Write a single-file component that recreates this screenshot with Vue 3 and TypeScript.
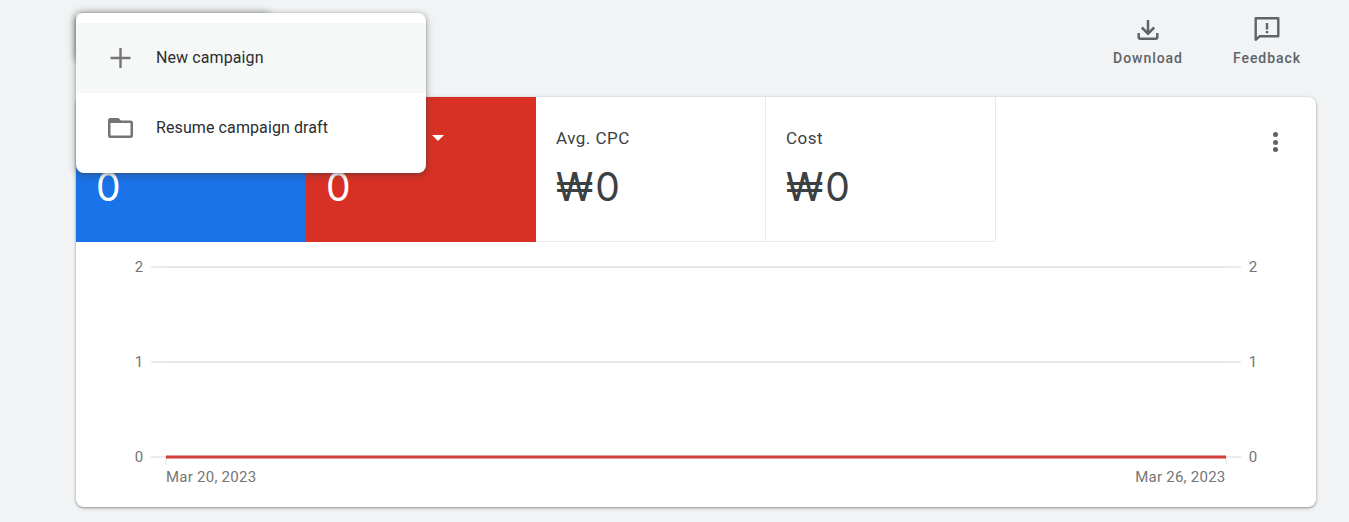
<script setup lang="ts">
interface Tile {
  label: string
  value: string
  kind: string
}

const tiles: Tile[] = [
  { label: 'Clicks', value: '0', kind: 'blue' },
  { label: 'Impressions', value: '0', kind: 'red' },
  { label: 'Avg. CPC', value: '₩0', kind: 'plain' },
  { label: 'Cost', value: '₩0', kind: 'plain' },
]

const gridLines = [
  { label: '2', y: 267 },
  { label: '1', y: 362 },
  { label: '0', y: 457 },
]
</script>

<template>
  <div class="page">
    <header class="toolbar">
      <button class="create">New campaign</button>
      <div class="actions">
        <button class="action">
          <svg width="30" height="30" viewBox="0 0 30 30" fill="none" stroke="#5f6368" stroke-width="2.500">
            <path d="M5.700 18v4.300a1.400 1.400 0 0 0 1.400 1.400h15.800a1.400 1.400 0 0 0 1.400-1.400V18" />
            <path d="M15 5v13M8.800 12.500l6.200 6.200 6.200-6.200" />
          </svg>
          <span>Download</span>
        </button>
        <button class="action">
          <svg width="30" height="30" viewBox="0 0 30 30" fill="none" stroke="#5f6368" stroke-width="2.400" stroke-linejoin="round">
            <path d="M3.700 3.200h22.600v18H7.800l-4.100 3.600z" />
            <path d="M15 8v6.500M15 16v2.200" />
          </svg>
          <span>Feedback</span>
        </button>
      </div>
    </header>

    <section class="card">
      <div class="tile-row">
        <div class="tiles">
          <div v-for="tile in tiles" :key="tile.label" class="tile" :class="tile.kind">
            <div class="tile-label">
              <span>{{ tile.label }}</span>
              <i v-if="tile.kind !== 'plain'" class="caret"></i>
            </div>
            <div class="tile-value">{{ tile.value }}</div>
          </div>
        </div>
        <button class="more">
          <i></i>
          <i></i>
          <i></i>
        </button>
      </div>

      <svg class="chart" width="1240" height="265" viewBox="76 242 1240 265">
        <g v-for="line in gridLines" :key="line.label">
          <line x1="151" x2="1241" :y1="line.y" :y2="line.y" stroke="#ebebeb" stroke-width="2" />
          <line x1="166" x2="1226" :y1="line.y" :y2="line.y" stroke="#e6e6e6" stroke-width="2" />
          <text x="139" :y="line.y + 5" text-anchor="middle" class="axis">{{ line.label }}</text>
          <text x="1253" :y="line.y + 5" text-anchor="middle" class="axis">{{ line.label }}</text>
        </g>
        <line x1="166" x2="166" y1="457" y2="465" stroke="#e3e4e6" />
        <line x1="1226" x2="1226" y1="457" y2="465" stroke="#e3e4e6" />
        <line x1="166" x2="1226" y1="457" y2="457" stroke="#d23f3b" stroke-width="3" />
        <text x="166" y="482" class="axis date">Mar 20, 2023</text>
        <text x="1225.500" y="482" text-anchor="end" class="axis date">Mar 26, 2023</text>
      </svg>
    </section>

    <div class="menu">
      <div class="menu-item active">
        <svg width="24" height="24" viewBox="0 0 24 24" fill="#757575">
          <path d="M11.300 2h2.400v8.800h8.800v2.400h-8.800V22h-2.400v-8.800H2.500v-2.400h8.800z" />
        </svg>
        <span>New campaign</span>
      </div>
      <div class="menu-item">
        <svg width="26" height="24" viewBox="0 0 26 24" fill="#757575" fill-rule="evenodd">
          <path d="M2.500 2h8L13 4.500h9.500A2.500 2.500 0 0 1 25 7v12.500a2.500 2.500 0 0 1-2.500 2.500h-20A2.500 2.500 0 0 1 0 19.500v-15A2.500 2.500 0 0 1 2.500 2zm0 5v12.500h20V7z" />
        </svg>
        <span>Resume campaign draft</span>
      </div>
    </div>
  </div>
</template>

<style>
html,
body {
  margin: 0;
  background: #f1f3f4;
  overflow: hidden;
}
</style>

<style scoped>
.page {
  position: relative;
  height: 522px;
  padding: 0 33px 0 76px;
  box-sizing: border-box;
  font-family: Roboto, "Liberation Sans", sans-serif;
  background: #f1f3f4;
}

button {
  border: 0;
  background: none;
  padding: 0;
  font-family: inherit;
}

.toolbar {
  display: flex;
  justify-content: space-between;
  height: 97px;
}

.create {
  width: 194px;
  height: 46px;
  margin-top: 13px;
  border-radius: 4px;
  background: #fff;
  box-shadow: 0 2px 6px rgba(60, 64, 67, 0.45), 0 0 10px rgba(60, 64, 67, 0.3);
}

.actions {
  display: flex;
  gap: 50px;
  padding-top: 15px;
  padding-right: 15px;
}

.action {
  display: flex;
  flex-direction: column;
  align-items: center;
  color: #5f6368;
  font-size: 14px;
  font-weight: 500;
  letter-spacing: 0.95px;
}

.action svg {
  display: block;
}

.action span {
  margin-top: 4px;
  line-height: 18px;
}

.card {
  height: 410px;
  background: #fff;
  border-radius: 8px;
  overflow: hidden;
  box-shadow: 0 1px 2px rgba(60, 64, 67, 0.35), 0 1px 3px 1px rgba(60, 64, 67, 0.18);
}

.tile-row {
  display: flex;
  justify-content: space-between;
}

.tiles {
  display: flex;
}

.tile {
  width: 230px;
  height: 145px;
  box-sizing: border-box;
  padding: 32px 20px 0;
  color: #3c4043;
  border-right: 1px solid #e8eaed;
  border-bottom: 1px solid #e8eaed;
}

.tile.blue {
  background: #1a73e8;
  color: #fff;
  border: 0;
}

.tile.red {
  background: #d93025;
  color: #fff;
  border: 0;
}

.tile-label {
  display: flex;
  align-items: center;
  height: 18px;
  font-size: 17px;
  line-height: 18px;
  letter-spacing: 0.5px;
}

.caret {
  margin-left: 7px;
  border-left: 6px solid transparent;
  border-right: 6px solid transparent;
  border-top: 6px solid #fff;
}

.tile-value {
  margin-top: 15px;
  font-family: Inter, Roboto, sans-serif;
  font-size: 39px;
  font-weight: 400;
  letter-spacing: 2px;
  line-height: 50px;
}

.more {
  display: flex;
  flex-direction: column;
  gap: 2.5px;
  margin: 35px 38px 0 0;
  height: 20px;
}

.more i {
  width: 5px;
  height: 5px;
  border-radius: 50%;
  background: #5f6368;
}

.chart {
  display: block;
}

.axis {
  font-size: 15px;
  fill: #757575;
}

.date {
  letter-spacing: 0.25px;
}

.menu {
  position: absolute;
  top: 13px;
  left: 76px;
  width: 350px;
  padding: 10px 0;
  background: #fff;
  border-radius: 8px;
  box-shadow: 0 2px 6px 2px rgba(60, 64, 67, 0.25), 0 1px 3px rgba(60, 64, 67, 0.4);
}

.menu-item {
  display: flex;
  align-items: center;
  height: 70px;
  box-sizing: border-box;
  padding: 0 0 2px 80px;
  position: relative;
  font-size: 16px;
  letter-spacing: 0.1px;
  color: #2b2d30;
}

.menu-item.active {
  background: #f6f8f7;
}

.menu-item svg {
  position: absolute;
  left: 32px;
  top: 23px;
}
</style>
